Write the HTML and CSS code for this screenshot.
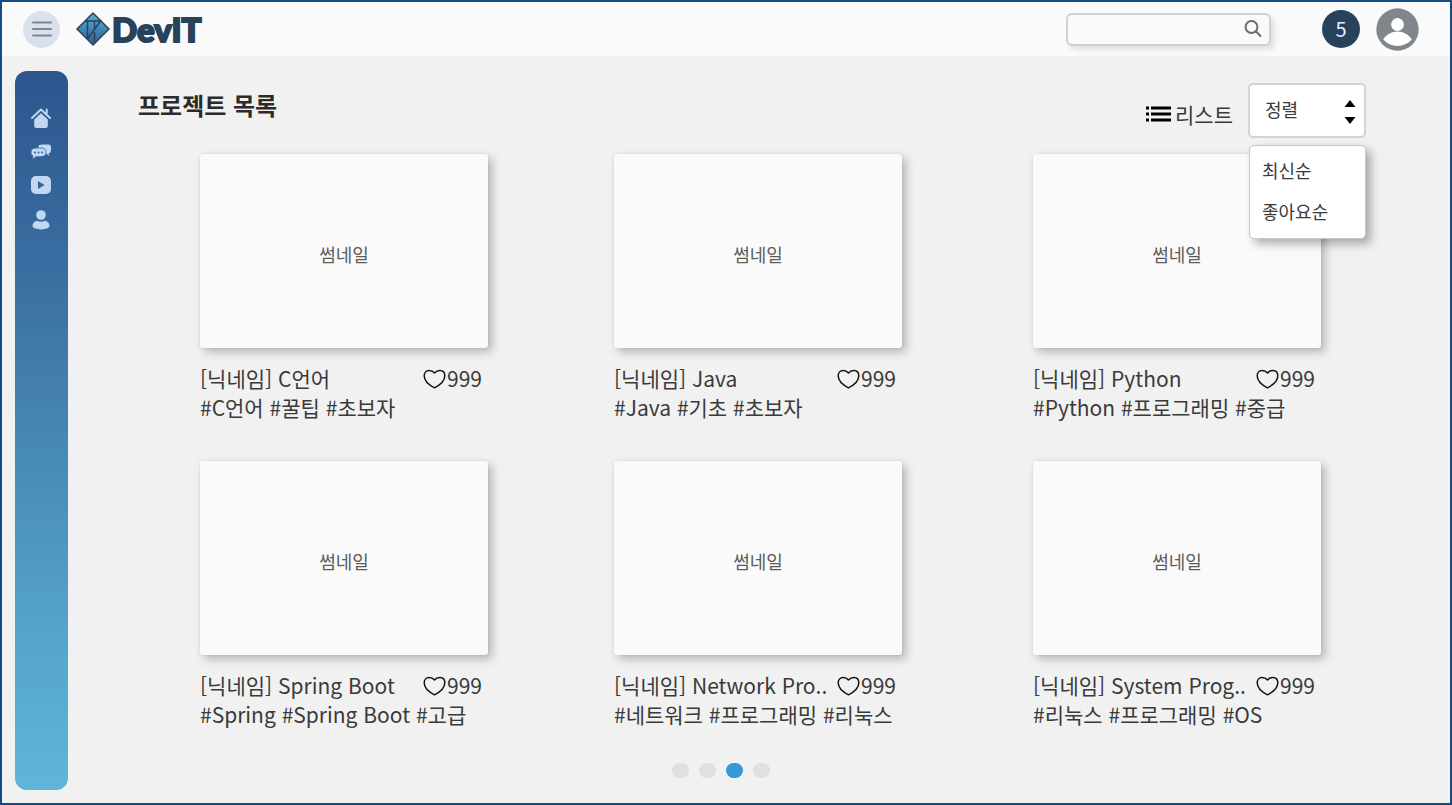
FILE: index.html
```html
<!DOCTYPE html>
<html lang="ko">
<head>
<meta charset="utf-8">
<meta name="viewport" content="width=device-width, initial-scale=1">
<title>DevIT</title>
<link rel="stylesheet" href="styles.css">
</head>
<body>
<svg class="defs" aria-hidden="true">
  <symbol id="heart" viewBox="0 0 24 20"><path d="M11.500 18.800C8.500 17.300 1.200 12.800 1.200 6.800C1.200 3.500 3.300 1.500 6 1.500C8.300 1.500 10.200 2.400 11.500 4C12.800 2.400 14.700 1.500 17 1.500C19.700 1.500 21.800 3.500 21.800 6.800C21.800 12.800 14.500 17.300 11.500 18.800Z" fill="none" stroke="#111" stroke-width="1.500" stroke-linejoin="round"/></symbol>
</svg>
<div class="app">
  <header class="header">
    <button class="menu-button" type="button" aria-label="메뉴">
      <svg width="20" height="16" viewBox="0 0 20 16"><path d="M1 1.500H19M1 8H19M1 14.500H19" stroke="#7c869b" stroke-width="2" stroke-linecap="round"/></svg>
    </button>
    <a class="logo" href="#">
      <svg width="34" height="34" viewBox="0 0 34 34">
        <defs><linearGradient id="gem" x1="0" y1="0" x2="0" y2="1"><stop offset="0" stop-color="#58aed6"/><stop offset="1" stop-color="#2c5c94"/></linearGradient></defs>
        <path d="M17 1L33 17L17 33L1 17Z" fill="url(#gem)" stroke="#28425a" stroke-width="1.500" stroke-linejoin="round"/>
        <path d="M9 9H24.500L11.500 27M11.500 9V27M18.500 9V17M18.500 20V32" fill="none" stroke="#28425a" stroke-width="1.500"/>
      </svg>
      <span>DevIT</span>
    </a>
    <form class="search" role="search">
      <input class="search-input" type="search" aria-label="검색">
      <button class="search-button" type="submit" aria-label="검색">
        <svg width="18" height="18" viewBox="0 0 18 18"><circle cx="7.500" cy="7" r="5.900" fill="none" stroke="#706a6a" stroke-width="2"/><path d="M11.800 11.300L17 16.500" stroke="#706a6a" stroke-width="2"/></svg>
      </button>
    </form>
    <a class="count" href="#">5</a>
    <a class="avatar" href="#" aria-label="내 프로필">
      <svg width="43" height="43" viewBox="0 0 43 43"><circle cx="21.500" cy="21.500" r="21.200" fill="#80868b"/><circle cx="21.500" cy="16.500" r="6.400" fill="#fff"/><path d="M7.200 31.500C10 26.500 16 23.500 21.500 23.500S33 26.500 35.800 31.500C32 35.800 27 38 21.500 38S11 35.800 7.200 31.500Z" fill="#fff"/></svg>
    </a>
  </header>
  <div class="body">
    <nav class="sidebar" aria-label="주 메뉴">
      <a href="#" aria-label="홈"><svg width="20" height="20" viewBox="0 0 20 20"><path d="M3.200 11.500L10 5.200L16.800 11.500V17.800Q16.800 20 14.800 20H5.200Q3.200 20 3.200 17.800Z" fill="#c2d8f0"/><path d="M1 10L10 1.500L19 10M15.700 6V1.500" fill="none" stroke="#c2d8f0" stroke-width="2" stroke-linecap="round" stroke-linejoin="round"/><path d="M1.500 11.900L10 3.900L18.500 11.900" fill="none" stroke="#315f95" stroke-width=".8"/></svg></a>
      <a href="#" aria-label="채팅"><svg width="20" height="16" viewBox="0 0 20 16" fill="#c2d8f0"><path d="M7 3C7.500 1.300 9 .5 11 .5H18Q20 .5 20 3V6C20 8 18.800 9.300 17.500 9.500L18.500 12L15 9.500Z"/><path d="M5 4H10Q15 4 15 8.300T10 12.700H5L1.500 15.500L2 12C.5 11.300 0 10 0 8.300Q0 4 5 4Z" stroke="#33659a" stroke-width=".8"/><g fill="#33659a"><circle cx="4" cy="8.500" r="1"/><circle cx="7.500" cy="8.500" r="1"/><circle cx="11" cy="8.500" r="1"/></g></svg></a>
      <a href="#" aria-label="영상"><svg width="20" height="18" viewBox="0 0 20 18"><rect width="20" height="18" rx="5" fill="#c2d8f0"/><path d="M7 5L13.500 9L7 13Z" fill="#33659a"/></svg></a>
      <a href="#" aria-label="프로필"><svg width="18" height="20" viewBox="0 0 18 20" fill="#c2d8f0"><circle cx="9" cy="5" r="4.800"/><path d="M5 10.800Q9 12.800 13 10.800Q17.500 12 17.500 16Q17.500 17.500 15.500 18.300Q9 20.500 2.500 18.300Q.5 17.500 .5 16Q.5 12 5 10.800Z"/></svg></a>
    </nav>
    <main class="main">
      <div class="toolbar">
        <h1 class="title">프로젝트 목록</h1>
        <button class="view-button" type="button">
          <svg width="26" height="16" viewBox="0 0 26 16"><path d="M1 2H4M1 8H4M1 14H4M6 2H26M6 8H26M6 14H26" stroke="#000" stroke-width="3"/></svg>리스트</button>
        <div class="sort">
          <select class="sort-select" aria-label="정렬"><option>정렬</option><option>최신순</option><option>좋아요순</option></select>
          <svg class="sort-arrows" width="12" height="24" viewBox="0 0 12 24"><path d="M6 0L11.500 7H.5ZM6 24L11.500 17H.5Z"/></svg>
          <div class="sort-menu">
            <button type="button">최신순</button>
            <button type="button">좋아요순</button>
          </div>
        </div>
      </div>
      <div class="grid">
        <article class="card"><a class="thumb" href="#">썸네일</a><div class="meta"><h2 class="name">[닉네임] C언어</h2><button class="like" type="button"><svg width="24" height="20"><use href="#heart"/></svg>999</button></div><p class="tags">#C언어 #꿀팁 #초보자</p></article>
        <article class="card"><a class="thumb" href="#">썸네일</a><div class="meta"><h2 class="name">[닉네임] Java</h2><button class="like" type="button"><svg width="24" height="20"><use href="#heart"/></svg>999</button></div><p class="tags">#Java #기초 #초보자</p></article>
        <article class="card"><a class="thumb" href="#">썸네일</a><div class="meta"><h2 class="name">[닉네임] Python</h2><button class="like" type="button"><svg width="24" height="20"><use href="#heart"/></svg>999</button></div><p class="tags">#Python #프로그래밍 #중급</p></article>
        <article class="card"><a class="thumb" href="#">썸네일</a><div class="meta"><h2 class="name">[닉네임] Spring Boot</h2><button class="like" type="button"><svg width="24" height="20"><use href="#heart"/></svg>999</button></div><p class="tags">#Spring #Spring Boot #고급</p></article>
        <article class="card"><a class="thumb" href="#">썸네일</a><div class="meta"><h2 class="name">[닉네임] Network Pro..</h2><button class="like" type="button"><svg width="24" height="20"><use href="#heart"/></svg>999</button></div><p class="tags">#네트워크 #프로그래밍 #리눅스</p></article>
        <article class="card"><a class="thumb" href="#">썸네일</a><div class="meta"><h2 class="name">[닉네임] System Prog..</h2><button class="like" type="button"><svg width="24" height="20"><use href="#heart"/></svg>999</button></div><p class="tags">#리눅스 #프로그래밍 #OS</p></article>
      </div>
      <div class="pager">
        <button type="button" aria-label="1 페이지"></button>
        <button type="button" aria-label="2 페이지"></button>
        <button type="button" aria-label="3 페이지" aria-current="page"></button>
        <button type="button" aria-label="4 페이지"></button>
      </div>
    </main>
  </div>
</div>
</body>
</html>
```

FILE: styles.css
```css
* { box-sizing: border-box; }

body {
  margin: 0;
  font-family: "Noto Sans CJK KR", "Noto Sans", sans-serif;
  color: #3a3a3a;
}

button, input, select { font: inherit; color: inherit; }
button { padding: 0; border: 0; background: none; cursor: pointer; }
a { color: inherit; text-decoration: none; }
svg { display: block; flex: none; }
.defs { position: absolute; width: 0; height: 0; }

.app {
  display: flex;
  flex-direction: column;
  min-height: 100vh;
  border: 2px solid #144c82;
  background: #f1f1f1;
}

.header {
  display: flex;
  align-items: center;
  height: 54px;
  padding: 0 31px 0 21px;
  background: #fafafa;
}

.menu-button {
  display: grid;
  place-items: center;
  width: 37px;
  height: 37px;
  border-radius: 50%;
  background: #dae1ed;
}

.logo {
  display: flex;
  align-items: center;
  gap: 2px;
  margin-left: 16px;
  margin-right: auto;
  font: 900 33px/40px Lato, sans-serif;
  color: #28425a;
  -webkit-text-stroke: 2px #28425a;
}

.search {
  display: flex;
  align-items: center;
  width: 205px;
  height: 33px;
  border: 2px solid #d0d0d0;
  border-radius: 6px;
  background: #fafafa;
  box-shadow: 4px 4px 5px #e2e2e2;
}

.search-input {
  flex: 1;
  min-width: 0;
  height: 100%;
  padding: 0 8px;
  border: 0;
  outline: 0;
  background: none;
  font-size: 16px;
}

.search-button { margin-right: 7px; }

.count {
  display: grid;
  place-items: center;
  width: 38px;
  height: 38px;
  margin-left: 51px;
  border-radius: 50%;
  background: #28425a;
  color: #e9edff;
  font-size: 20px;
  line-height: 38px;
}

.avatar { margin-left: 16px; }

.body { display: flex; flex: 1; }

.sidebar {
  display: flex;
  flex-direction: column;
  align-items: center;
  gap: 16px;
  width: 53px;
  margin: 15px 0 13px 13px;
  padding: 37px 2px 0 0;
  border-radius: 12px;
  background: linear-gradient(#2c568d, #3b70a3 30%, #53a1ca 75%, #60b5da);
}

.main { flex: 1; padding: 27px 84px 24px 70px; }

.toolbar { display: flex; align-items: flex-start; }

.title {
  margin: 4px auto 0 0;
  font-size: 24px;
  line-height: 36px;
  font-weight: 700;
  color: #2b2b2b;
}

.view-button {
  display: flex;
  align-items: center;
  gap: 4px;
  margin: 16px 15px 0 0;
  font-size: 21px;
  line-height: 30px;
}

.sort { position: relative; width: 118px; }

.sort-select {
  appearance: none;
  width: 100%;
  height: 55px;
  padding: 0 32px 4px 15px;
  border: 2px solid #d4d4d4;
  border-radius: 5px;
  background: #fff;
  font-size: 18px;
}

.sort-arrows {
  position: absolute;
  top: 17px;
  right: 10px;
  pointer-events: none;
}

.sort-menu {
  position: absolute;
  top: 62px;
  right: 0;
  display: flex;
  flex-direction: column;
  width: 117px;
  padding: 4px 0 6px;
  border: 1px solid #c8c8c8;
  border-radius: 5px;
  background: #fff;
  box-shadow: 5px 5px 10px #0000004d;
}

.sort-menu button {
  padding-left: 12px;
  font-size: 18px;
  line-height: 41px;
  text-align: left;
}

.grid {
  display: grid;
  grid-template-columns: 414fr 419fr 289fr;
  row-gap: 39px;
  margin: 16px 44px 0 62px;
}

.card { width: 288px; }

.thumb {
  display: grid;
  place-items: center;
  height: 194px;
  padding-top: 6px;
  border-radius: 3px;
  background: #fafafa;
  box-shadow: 4px 4px 10px #00000040, 0 0 3px #00000014;
  font-size: 18px;
  color: #5c5c5c;
}

.meta {
  display: flex;
  align-items: center;
  justify-content: space-between;
  margin-top: 16px;
}

.name, .tags {
  margin: 0;
  font-size: 21px;
  font-weight: 400;
  line-height: 29px;
  white-space: nowrap;
}

.like {
  display: flex;
  align-items: center;
  width: 65px;
  font-size: 21px;
  line-height: 29px;
}

.pager {
  display: flex;
  justify-content: center;
  gap: 10px;
  margin: 34px 62px 0 0;
}

.pager button {
  width: 17px;
  height: 15px;
  border-radius: 8px;
  background: #e0e0e0;
}

.pager button[aria-current] { background: #3598db; }
```
